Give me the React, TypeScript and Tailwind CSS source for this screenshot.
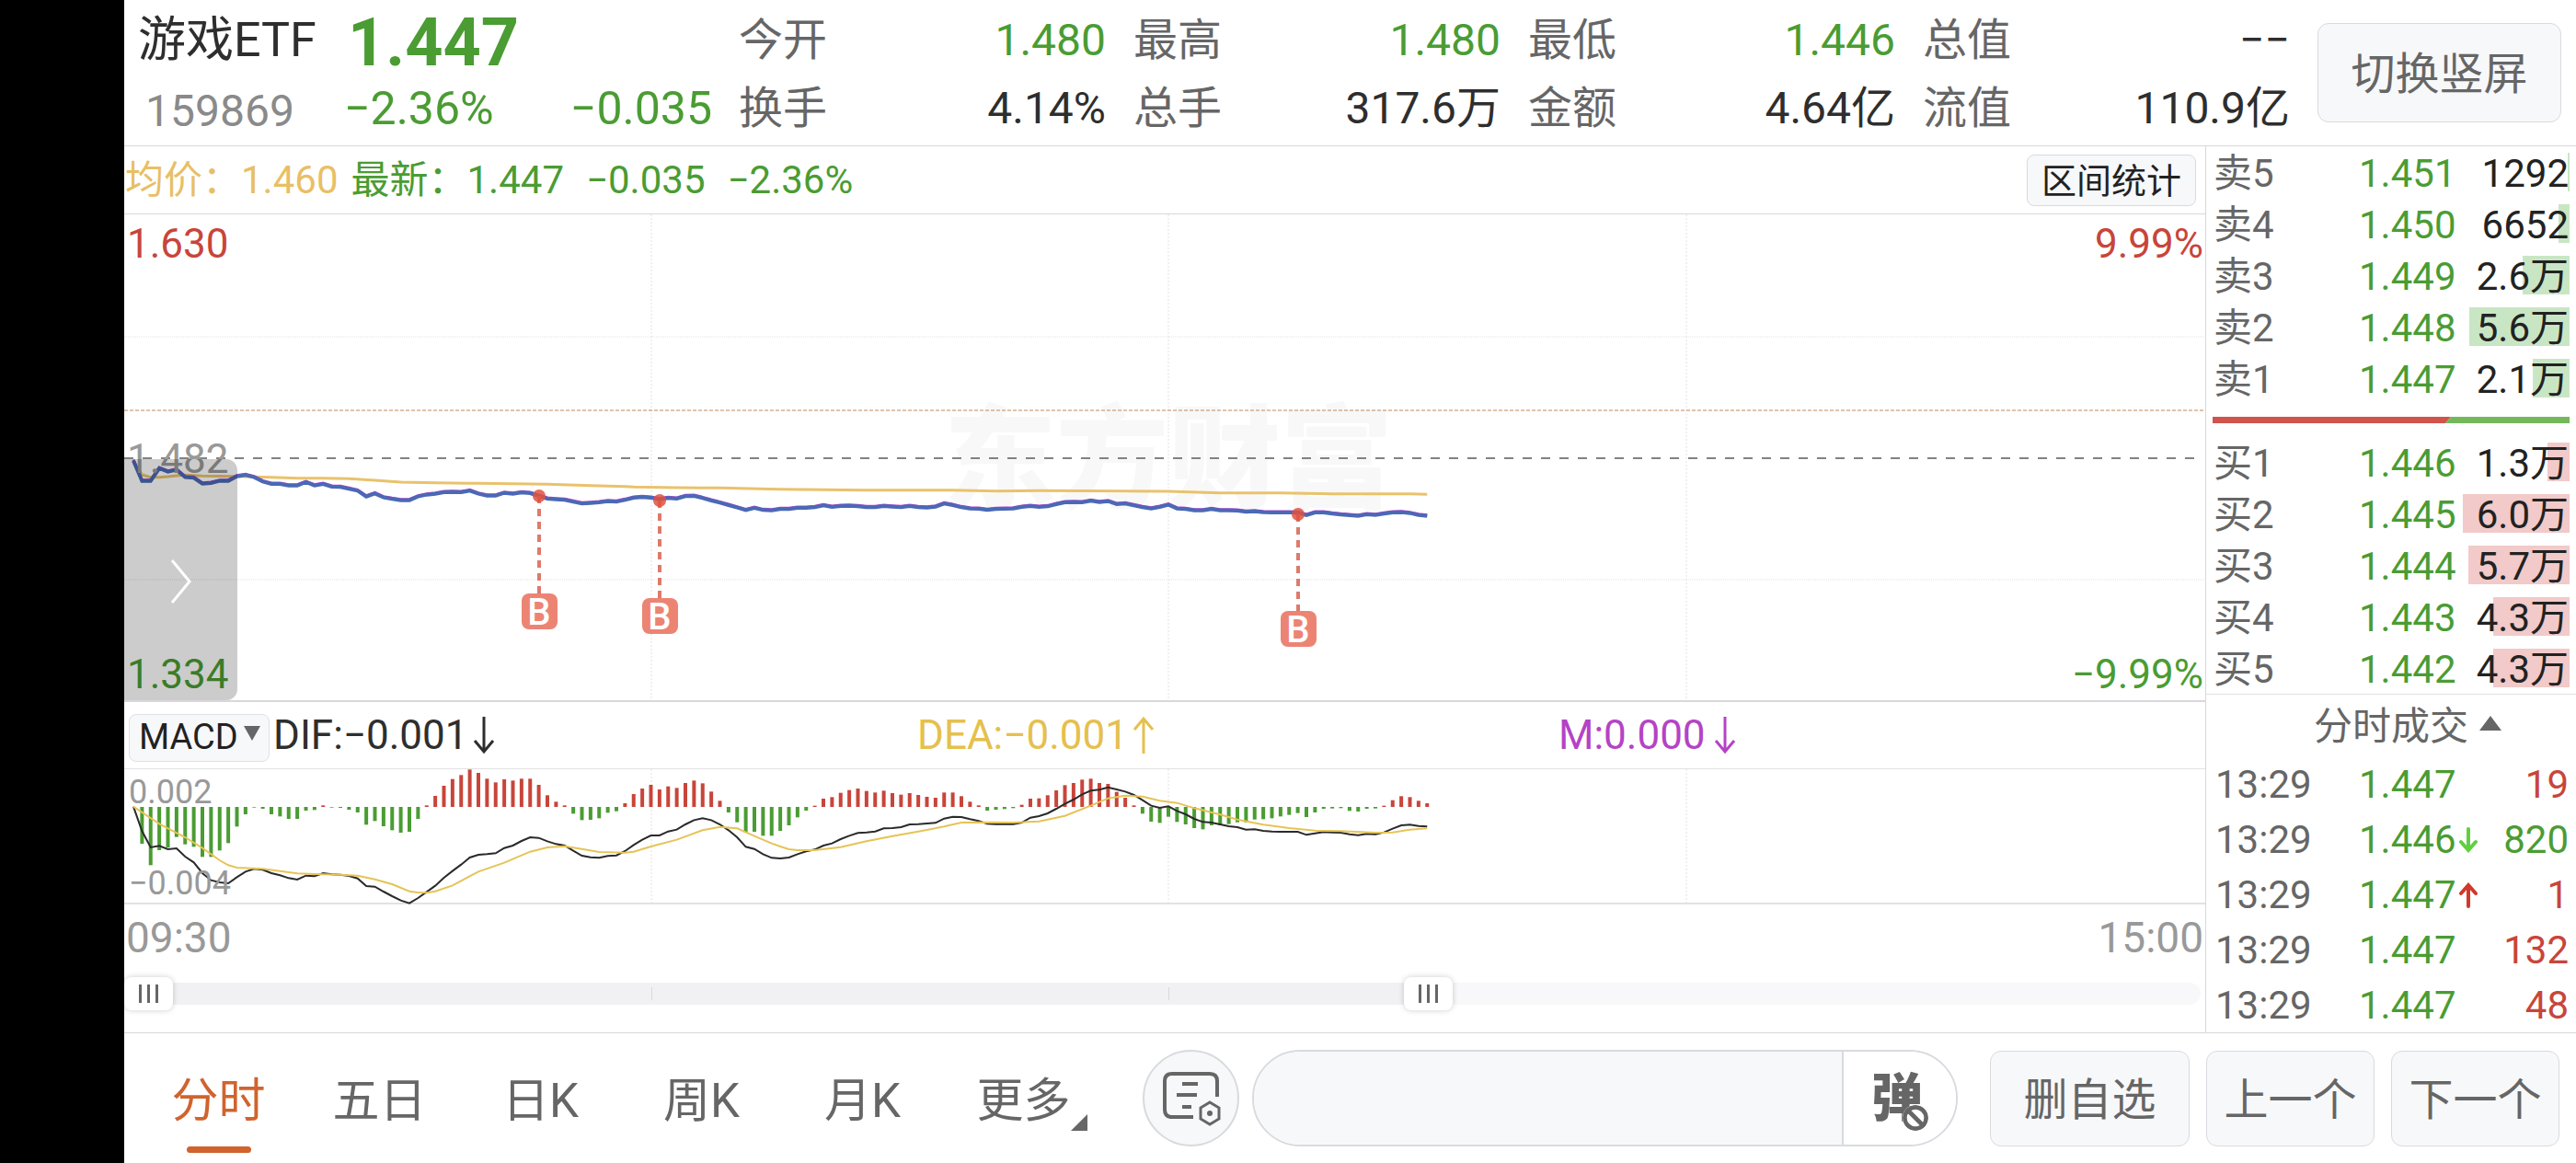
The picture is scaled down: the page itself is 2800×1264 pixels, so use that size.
import React, { useState } from 'react';
import { Ban } from 'lucide-react';
import clsx from 'clsx';

const STATS = [
  [
    { label: '今开', value: '1.480', down: true },
    { label: '换手', value: '4.14%' },
  ],
  [
    { label: '最高', value: '1.480', down: true },
    { label: '总手', value: '317.6万' },
  ],
  [
    { label: '最低', value: '1.446', down: true },
    { label: '金额', value: '4.64亿' },
  ],
  [
    { label: '总值', value: '−−' },
    { label: '流值', value: '110.9亿' },
  ],
];

interface Level {
  label: string;
  price: string;
  volume: string;
  bar: number;
}

const ASKS: Level[] = [
  { label: '卖5', price: '1.451', volume: '1292', bar: 2 },
  { label: '卖4', price: '1.450', volume: '6652', bar: 12 },
  { label: '卖3', price: '1.449', volume: '2.6万', bar: 51 },
  { label: '卖2', price: '1.448', volume: '5.6万', bar: 109 },
  { label: '卖1', price: '1.447', volume: '2.1万', bar: 40 },
];

const BIDS: Level[] = [
  { label: '买1', price: '1.446', volume: '1.3万', bar: 24 },
  { label: '买2', price: '1.445', volume: '6.0万', bar: 116 },
  { label: '买3', price: '1.444', volume: '5.7万', bar: 110 },
  { label: '买4', price: '1.443', volume: '4.3万', bar: 83 },
  { label: '买5', price: '1.442', volume: '4.3万', bar: 83 },
];

const TRADES = [
  { time: '13:29', price: '1.447', volume: '19', side: 'buy' },
  { time: '13:29', price: '1.446', volume: '820', side: 'sell', move: 'down' },
  { time: '13:29', price: '1.447', volume: '1', side: 'buy', move: 'up' },
  { time: '13:29', price: '1.447', volume: '132', side: 'buy' },
  { time: '13:29', price: '1.447', volume: '48', side: 'buy' },
];

const TABS = ['分时', '五日', '日K', '周K', '月K', '更多'];

// one sample per minute, in thirds of a pixel
const PRICE = [
  242, 308, 308, 267, 278, 272, 296, 298, 317, 315, 308, 308, 293, 289, 296, 310, 318, 318, 323, 323,
  312, 323, 318, 327, 328, 334, 340, 359, 349, 362, 367, 371, 371, 359, 353, 350, 345, 344, 345, 340,
  350, 356, 356, 347, 350, 346, 348, 357, 366, 368, 370, 376, 382, 380, 378, 374, 376, 370, 363, 361,
  363, 368, 364, 366, 358, 357, 364, 372, 379, 387, 395, 403, 396, 403, 404, 400, 400, 396, 396, 394,
  388, 393, 390, 389, 391, 394, 394, 390, 392, 394, 390, 394, 395, 392, 382, 387, 394, 398, 399, 403,
  400, 399, 398, 393, 390, 393, 391, 384, 378, 377, 378, 373, 377, 374, 384, 382, 388, 394, 398, 393,
  386, 398, 400, 404, 404, 400, 404, 404, 405, 409, 407, 410, 411, 411, 411, 412, 420, 411, 411, 415,
  418, 420, 422, 417, 419, 415, 411, 410, 413, 419, 422,
];

// [minute, level]
const AVERAGE = [
  [0, 242], [1, 288], [2, 296], [3, 296], [4, 294], [5, 291], [6, 289], [8, 292], [12, 293], [16, 296],
  [19, 299], [22, 299], [25, 301], [28, 306], [31, 312], [35, 314], [40, 316], [48, 319], [53, 323],
  [57, 326], [58, 328], [63, 330], [68, 331], [75, 335], [85, 338], [95, 338], [100, 341], [105, 340],
  [120, 342], [126, 347], [133, 347], [139, 350], [148, 350], [150, 352],
];

const HISTOGRAM = [
  0, -120, -190, -141, -132, -98, -122, -130, -163, -163, -142, -118, -64, -24, -2, -6, -24, -31, -39, -39,
  -12, -10, 5, -2, -3, -9, -18, -58, -46, -63, -76, -84, -81, -39, 5, 36, 69, 91, 104, 122,
  111, 92, 80, 90, 86, 92, 92, 72, 38, 17, 5, -22, -43, -42, -37, -19, -14, 12, 42, 60,
  72, 57, 67, 62, 78, 86, 77, 50, 20, -18, -50, -84, -81, -94, -94, -78, -60, -34, -12, 4,
  27, 32, 46, 55, 60, 52, 47, 53, 45, 40, 45, 39, 33, 30, 47, 47, 35, 17, 5, -12,
  -9, -7, -4, 7, 27, 28, 38, 54, 71, 78, 89, 92, 78, 75, 49, 30, 5, -22, -48, -52,
  -32, -49, -57, -69, -73, -60, -60, -56, -50, -50, -41, -40, -37, -31, -26, -20, -33, -18, -6, -5,
  -4, -13, -15, -6, -5, 4, 22, 35, 32, 20, 12,
];

const DIF = [
  350, 430, 483, 478, 489, 486, 513, 532, 567, 590, 597, 600, 580, 562, 553, 556, 567, 574, 583, 588,
  575, 577, 567, 571, 572, 576, 584, 609, 611, 627, 642, 656, 665, 648, 628, 608, 582, 560, 539, 516,
  507, 505, 502, 485, 477, 462, 450, 452, 463, 472, 477, 494, 510, 515, 517, 511, 509, 495, 475, 458,
  444, 444, 431, 425, 408, 394, 388, 394, 408, 427, 450, 481, 488, 505, 517, 519, 516, 505, 496, 490,
  477, 470, 456, 445, 436, 434, 431, 421, 420, 417, 408, 407, 405, 403, 389, 383, 384, 391, 397, 406,
  407, 407, 407, 402, 386, 381, 372, 357, 341, 327, 310, 298, 295, 287, 294, 301, 312, 329, 347, 354,
  349, 364, 375, 390, 400, 402, 408, 414, 417, 425, 424, 429, 431, 432, 432, 432, 442, 437, 433, 434,
  435, 440, 443, 439, 440, 434, 422, 411, 409, 413, 415,
];

const DEA = [
  [0, 350], [3, 406], [6, 450], [8, 485], [10, 525], [11, 541], [12, 549], [15, 553], [17, 560],
  [19, 568], [21, 570], [24, 572], [26, 575], [28, 587], [30, 603], [32, 626], [33, 630], [34, 631],
  [35, 626], [37, 607], [38, 592], [40, 562], [43, 533], [46, 497], [48, 483], [50, 479], [52, 488],
  [54, 498], [57, 500], [58, 497], [60, 480], [63, 458], [66, 427], [68, 416], [70, 421], [72, 446],
  [74, 470], [75, 480], [76, 489], [77, 492], [79, 492], [82, 482], [85, 463], [88, 446], [91, 431],
  [94, 415], [96, 402], [98, 401], [102, 402], [105, 398], [108, 380], [111, 347], [113, 323],
  [115, 314], [117, 317], [119, 331], [121, 338], [123, 355], [126, 376], [128, 392], [131, 409],
  [134, 420], [137, 428], [140, 430], [144, 435], [146, 434], [148, 425], [150, 421],
];

const BUYS = [
  { x: 451, y: 306, badge: 412 },
  { x: 582, y: 311, badge: 417 },
  { x: 1276, y: 326, badge: 431 },
];

const GRID_X = [573, 1135, 1698];

const minuteX = (minute: number) => 10 + minute * 9.375;
const priceY = (v: number) => 187 + v / 3;
const macdY = (v: number) => v / 3 - 76;

const toPoints = (data: number[][], scale: (v: number) => number) =>
  data.map(([minute, v]) => `${minuteX(minute)},${scale(v)}`).join(' ');

const indexed = (data: number[]) => data.map((v, i) => [i, v]);

function Header() {
  return (
    <header className="flex h-[159px] shrink-0 items-center border-b border-[#d8d8da] pr-4">
      <div className="flex w-[239px] flex-col pt-1 pl-[15px]">
        <h1 className="h-[74px] text-[52px] leading-[74px] text-[#2e2e2e]">游戏ETF</h1>
        <span className="h-[74px] pl-2 text-[48px] leading-[80px] text-[#8a8a8a]">159869</span>
      </div>
      <div className="flex w-[400px] flex-col pt-1 text-[#4a9c33]">
        <strong className="h-[74px] pl-1 text-[72px] leading-[80px] font-bold">1.447</strong>
        <div className="flex h-[74px] justify-between text-[50px] leading-[74px]">
          <span>−2.36%</span>
          <span>−0.035</span>
        </div>
      </div>
      <div className="ml-[29px] grid flex-1 grid-cols-4 gap-x-[30px] pt-1">
        {STATS.map((column) => (
          <dl key={column[0].label} className="text-[48px] leading-[74px]">
            {column.map((stat) => (
              <div key={stat.label} className="flex justify-between">
                <dt className="text-[#666]">{stat.label}</dt>
                <dd className={stat.down ? 'text-[#4a9c33]' : 'text-[#2e2e2e]'}>{stat.value}</dd>
              </div>
            ))}
          </dl>
        ))}
      </div>
      <button className="ml-[30px] h-[108px] w-[265px] rounded-xl border border-[#d8dadf] bg-[#f7f8fa] pt-1 text-[48px] text-[#666]">
        切换竖屏
      </button>
    </header>
  );
}

function PriceChart() {
  return (
    <div className="relative h-[530px] border-b-2 border-[#d8d8da]">
      <svg viewBox="0 0 2262 528" preserveAspectRatio="none" className="block h-full w-full">
        <text
          x="1135"
          y="309"
          textAnchor="middle"
          fontFamily="'Noto Sans CJK SC', sans-serif"
          fontSize="122"
          fontWeight="900"
          fill="#f8f8f8"
        >
          东方财富
        </text>
        {GRID_X.map((x) => (
          <line key={x} x1={x} x2={x} y1="0" y2="528" stroke="#e2e2e4" strokeWidth="1" strokeDasharray="2 2" />
        ))}
        {[133, 397].map((y) => (
          <line key={y} x1="0" x2="2262" y1={y} y2={y} stroke="#e2e2e4" strokeWidth="1" strokeDasharray="1 1" />
        ))}
        <line x1="0" x2="2260" y1="213" y2="213" stroke="#c0885a" strokeWidth="1" strokeDasharray="4 2" />
        <line x1="0" x2="2260" y1="265" y2="265" stroke="#828282" strokeWidth="2" strokeDasharray="10 10" />
        <polyline points={toPoints(AVERAGE, priceY)} fill="none" stroke="#e9c26c" strokeWidth="3" />
        <polyline
          points={toPoints(indexed(PRICE), (v) => priceY(v) - 1)}
          fill="none"
          stroke="#b23fd0"
          strokeWidth="3"
        />
        <polyline points={toPoints(indexed(PRICE), priceY)} fill="none" stroke="#4a69b5" strokeWidth="4" />
        {BUYS.map((buy) => (
          <g key={buy.x}>
            <line
              x1={buy.x}
              x2={buy.x}
              y1={buy.y}
              y2={buy.badge}
              stroke="#dd7a6b"
              strokeWidth="4"
              strokeDasharray="8 6"
            />
            <circle cx={buy.x} cy={buy.y} r="7" fill="#e0513f" fillOpacity="0.85" />
            <rect x={buy.x - 19} y={buy.badge} width="39" height="39" rx="8" fill="#ec8474" />
            <text
              x={buy.x}
              y={buy.badge + 34}
              textAnchor="middle"
              fontFamily="Roboto, sans-serif"
              fontSize="40"
              fontWeight="500"
              fill="#fff"
            >
              B
            </text>
          </g>
        ))}
      </svg>
      <div className="absolute inset-y-0 left-[3px] flex flex-col justify-between pt-[6px] pb-[2px] text-[44px] leading-[52px]">
        <span className="text-[#c8453a]">1.630</span>
        <span className="text-[#999]">1.482</span>
        <span className="text-[#4a9c33]">1.334</span>
      </div>
      <div className="absolute inset-y-0 right-[2px] flex flex-col justify-between pt-[6px] pb-[2px] text-right text-[44px] leading-[52px]">
        <span className="text-[#c8453a]">9.99%</span>
        <span className="text-[#4a9c33]">−9.99%</span>
      </div>
      <button
        aria-label="展开"
        className="absolute bottom-0 left-0 flex h-[262px] w-[123px] items-center justify-center rounded-r-xl bg-black/20"
      >
        <svg width="24" height="52" viewBox="0 0 24 52" fill="none" stroke="#fff" strokeWidth="3">
          <path d="M2 5 L21 28 L2 51" />
        </svg>
      </button>
    </div>
  );
}

function MacdChart() {
  return (
    <div className="relative h-[147px] border-b-2 border-[#e2e2e4]">
      <svg viewBox="0 0 2262 145" preserveAspectRatio="none" className="block h-full w-full overflow-visible">
        {GRID_X.map((x) => (
          <line key={x} x1={x} x2={x} y1="0" y2="145" stroke="#e2e2e4" strokeWidth="1" strokeDasharray="2 2" />
        ))}
        {HISTOGRAM.map((v, i) => (
          <line
            key={i}
            x1={minuteX(i)}
            x2={minuteX(i)}
            y1={macdY(351)}
            y2={macdY(351 - v)}
            stroke={v > 0 ? '#c8453a' : '#4a9c33'}
            strokeWidth="4"
          />
        ))}
        <polyline points={toPoints(indexed(DIF), macdY)} fill="none" stroke="#2a2a2a" strokeWidth="2" />
        <polyline points={toPoints(DEA, macdY)} fill="none" stroke="#e5c457" strokeWidth="2" />
      </svg>
      <div className="absolute top-[2px] bottom-[-2px] left-[5px] flex flex-col justify-between text-[36px] leading-[46px] text-[#999]">
        <span>0.002</span>
        <span>−0.004</span>
      </div>
    </div>
  );
}

function IndicatorArrow({ up }: { up?: boolean }) {
  return (
    <svg width="26" height="42" viewBox="0 0 26 42" fill="none" stroke="currentColor" strokeWidth="3">
      {up ? <path d="M13 41V4M3 15L13 3L23 15" /> : <path d="M13 1V38M3 27L13 39L23 27" />}
    </svg>
  );
}

const THUMB =
  'pointer-events-none absolute inset-0 h-full w-full appearance-none bg-transparent [&::-webkit-slider-thumb]:pointer-events-auto [&::-webkit-slider-thumb]:h-9 [&::-webkit-slider-thumb]:w-[53px] [&::-webkit-slider-thumb]:appearance-none [&::-webkit-slider-thumb]:rounded-lg [&::-webkit-slider-thumb]:bg-white [&::-webkit-slider-thumb]:bg-[repeating-linear-gradient(90deg,#666_0_3px,transparent_3px_9px)] [&::-webkit-slider-thumb]:bg-size-[21px_20px] [&::-webkit-slider-thumb]:bg-center [&::-webkit-slider-thumb]:bg-no-repeat [&::-webkit-slider-thumb]:shadow-[0_0_6px_rgba(0,0,0,0.2)]';

function RangeSlider() {
  const [start, setStart] = useState(0);
  const [end, setEnd] = useState(631);

  return (
    <div className="relative mr-[5px] flex h-14 items-center">
      <div className="relative h-6 w-full overflow-hidden rounded-full bg-[#f8f8fa]">
        <div className="h-full bg-[#f1f1f3]" style={{ width: `${end / 10}%` }} />
      </div>
      <span className="absolute left-[573px] h-[14px] w-px bg-[#d8d8da]" />
      <span className="absolute left-[1135px] h-[14px] w-px bg-[#d8d8da]" />
      <input
        type="range"
        aria-label="开始时间"
        min={0}
        max={1000}
        value={start}
        onChange={(e) => setStart(Number(e.target.value))}
        className={THUMB}
      />
      <input
        type="range"
        aria-label="结束时间"
        min={0}
        max={1000}
        value={end}
        onChange={(e) => setEnd(Number(e.target.value))}
        className={THUMB}
      />
    </div>
  );
}

function ChartPanel() {
  return (
    <section className="flex min-w-0 flex-1 flex-col">
      <div className="flex h-[74px] items-center border-b border-[#d8d8da] pr-[10px] pl-px text-[42px] text-[#4a9c33]">
        <span className="mr-[14px] text-[#e8bf66]">均价：1.460</span>
        <span className="mr-6">最新：1.447</span>
        <span className="mr-6">−0.035</span>
        <span>−2.36%</span>
        <button className="ml-auto h-14 w-[184px] rounded-lg border border-[#d8dadf] bg-[#f7f8fa] pt-[2px] text-[38px] leading-[52px] text-[#222]">
          区间统计
        </button>
      </div>
      <PriceChart />
      <div className="flex h-[73px] items-center border-b border-[#e2e2e4] text-[44px]">
        <div className="flex w-[862px] items-center gap-1 pl-[5px] text-[#2e2e2e]">
          <div className="relative">
            <select
              aria-label="指标"
              className="h-[52px] w-[153px] appearance-none rounded-lg border border-[#dfe1e5] bg-[#f7f8fa] pb-[2px] pl-[10px] text-[38px] leading-[48px] text-[#222]"
            >
              <option>MACD</option>
            </select>
            <svg width="18" height="16" viewBox="0 0 18 16" className="pointer-events-none absolute top-[23px] right-[10px]">
              <path d="M0 0H18L9 16Z" fill="#666" />
            </svg>
          </div>
          <span>DIF:−0.001</span>
          <IndicatorArrow />
        </div>
        <div className="flex w-[697px] items-center gap-1 text-[#e5c04c]">
          <span>DEA:−0.001</span>
          <IndicatorArrow up />
        </div>
        <div className="flex items-center gap-2 text-[#b443c6]">
          <span>M:0.000</span>
          <IndicatorArrow />
        </div>
      </div>
      <MacdChart />
      <div className="flex h-[69px] items-center justify-between px-[2px] pt-1 text-[46px] text-[#999]">
        <span>09:30</span>
        <span>15:00</span>
      </div>
      <RangeSlider />
    </section>
  );
}

function Levels({ levels, tone }: { levels: Level[]; tone: 'ask' | 'bid' }) {
  return (
    <table className="w-full table-fixed">
      <tbody>
        {levels.map((level) => (
          <tr key={level.label} className="h-14 leading-[52px]">
            <th scope="row" className="w-[166px] pt-1 pl-2 text-left font-normal text-[#666]">
              {level.label}
            </th>
            <td className="pt-1 text-[#4a9c33]">{level.price}</td>
            <td className="relative w-[124px] pt-1 pr-2 text-right text-[#222]">
              <span
                className={clsx('absolute top-[7px] right-[7px] h-[42px]', tone === 'ask' ? 'bg-[#c9e6c4]' : 'bg-[#f1cac9]')}
                style={{ width: level.bar }}
              />
              <span className="relative">{level.volume}</span>
            </td>
          </tr>
        ))}
      </tbody>
    </table>
  );
}

function TradeArrow({ move }: { move: string }) {
  return (
    <svg
      width="20"
      height="28"
      viewBox="0 0 20 28"
      fill="none"
      stroke={move === 'up' ? '#d0392b' : '#5fd03f'}
      strokeWidth="4"
      strokeLinecap="round"
      className="ml-[3px]"
    >
      {move === 'up' ? <path d="M10 26V4M2 12L10 3L18 12" /> : <path d="M10 2V24M2 16L10 25L18 16" />}
    </svg>
  );
}

function OrderBook() {
  return (
    <aside className="flex w-[403px] shrink-0 flex-col border-l border-[#d8d8da] text-[42px] leading-[56px]">
      <Levels levels={ASKS} tone="ask" />
      <div className="flex h-[35px] items-center px-[7px]">
        <svg viewBox="0 0 388 7" preserveAspectRatio="none" className="h-[7px] w-full">
          <path d="M0 0H259L253 7H0Z" fill="#d0544d" />
          <path d="M259 0H388V7H253Z" fill="#74b85c" />
        </svg>
      </div>
      <Levels levels={BIDS} tone="bid" />
      <button className="flex h-[68px] items-center justify-center gap-3 border-t border-[#e2e2e4] pt-[2px] pl-[36px] text-[#666]">
        分时成交
        <svg width="24" height="16" viewBox="0 0 24 16" className="mb-2">
          <path d="M12 0L24 16H0Z" fill="#666" />
        </svg>
      </button>
      <table className="w-full table-fixed">
        <tbody>
          {TRADES.map((trade, i) => (
            <tr key={i} className="h-[60px]">
              <td className="w-[166px] pt-[2px] pl-[10px] text-[#666]">{trade.time}</td>
              <td className="pt-[2px] text-[#4a9c33]">
                <span className="flex items-center">
                  {trade.price}
                  {trade.move && <TradeArrow move={trade.move} />}
                </span>
              </td>
              <td
                className={clsx(
                  'w-[96px] pt-[2px] pr-2 text-right',
                  trade.side === 'buy' ? 'text-[#c8453a]' : 'text-[#4a9c33]'
                )}
              >
                {trade.volume}
              </td>
            </tr>
          ))}
        </tbody>
      </table>
    </aside>
  );
}

function BottomBar() {
  const [active, setActive] = useState('分时');

  return (
    <footer className="flex h-[142px] shrink-0 items-center border-t border-[#d8d8da] pr-[18px] pl-[15px] text-[#666]">
      <nav className="grid h-full w-[1050px] grid-cols-6 text-[51px]">
        {TABS.map((tab) => (
          <button
            key={tab}
            onClick={() => setActive(tab)}
            className={clsx('relative flex items-center justify-center pt-2', tab === active && 'text-[#d0632e]')}
          >
            {tab}
            {tab === active && (
              <span className="absolute bottom-[11px] h-[7px] w-[70px] rounded-full bg-[#d0632e]" />
            )}
            {tab === '更多' && (
              <svg width="18" height="18" viewBox="0 0 18 18" className="absolute right-[18px] bottom-[35px]">
                <path d="M18 0V18H0Z" fill="#666" />
              </svg>
            )}
          </button>
        ))}
      </nav>
      <button
        aria-label="设置"
        className="ml-[42px] flex h-[105px] w-[105px] items-center justify-center rounded-full border-2 border-[#d8dadf] bg-[#f7f8fa]"
      >
        <svg width="64" height="60" viewBox="0 0 64 60" fill="none" stroke="#666" strokeWidth="4">
          <path d="M34 50H11Q3 50 3 42V11Q3 3 11 3H52Q60 3 60 11V28" />
          <path d="M22 14H39M16 26H38M22 39H32" />
          <path d="M52 34L62 40V52L52 58L42 52V40Z" strokeWidth="3" />
          <circle cx="52" cy="46" r="3" fill="#666" stroke="none" />
        </svg>
      </button>
      <div className="mr-[35px] ml-[14px] flex h-[105px] flex-1 overflow-hidden rounded-full border-2 border-[#d8dadf]">
        <input aria-label="弹幕" className="min-w-0 flex-1 bg-[#f7f8fa] px-10 text-[42px] outline-none" />
        <button
          aria-label="弹幕开关"
          className="flex w-[124px] items-center border-l-2 border-[#d8dadf] bg-white pl-[30px]"
        >
          <span className="relative text-[56px] leading-[70px] font-black">
            弹
            <Ban className="absolute right-[-6px] bottom-0 h-7 w-7 rounded-full bg-white" strokeWidth={4} />
          </span>
        </button>
      </div>
      <div className="flex gap-[18px] text-[48px]">
        <button className="h-[104px] w-[217px] rounded-xl border border-[#d8dadf] bg-[#f7f8fa] pt-1">删自选</button>
        <button className="h-[104px] w-[183px] rounded-xl border border-[#d8dadf] bg-[#f7f8fa] pt-1">上一个</button>
        <button className="h-[104px] w-[183px] rounded-xl border border-[#d8dadf] bg-[#f7f8fa] pt-1">下一个</button>
      </div>
    </footer>
  );
}

export default function App() {
  return (
    <div className="flex min-h-screen bg-black font-[Roboto,'Noto_Sans_CJK_SC',sans-serif] whitespace-nowrap">
      <main className="ml-[135px] flex min-w-0 flex-1 flex-col bg-white">
        <Header />
        <div className="flex flex-1">
          <ChartPanel />
          <OrderBook />
        </div>
        <BottomBar />
      </main>
    </div>
  );
}
